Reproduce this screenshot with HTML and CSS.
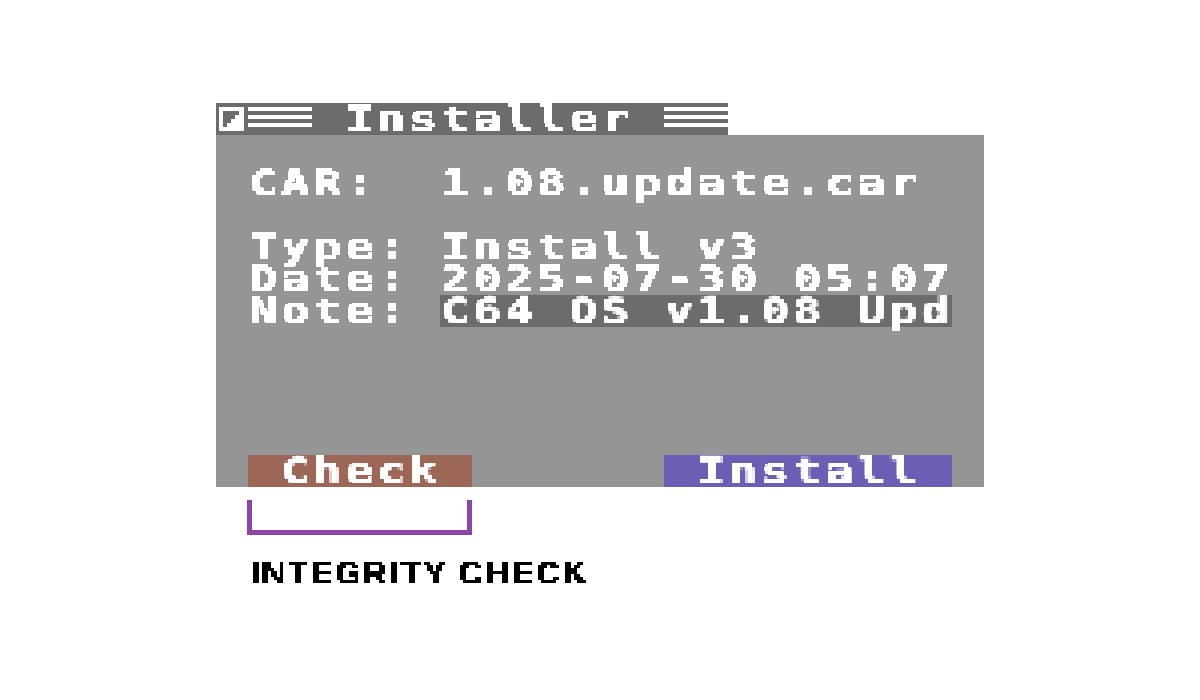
FILE: index.html
```html
<!DOCTYPE html>
<html lang="en">
<head>
    <meta charset="UTF-8">
    <title>Installer</title>
    <link rel="stylesheet" href="styles.css">
</head>
<body>
<svg class="filters" width="0" height="0" aria-hidden="true">
    <!-- snaps text onto the 4px C64 pixel grid -->
    <filter id="px4" x="0" y="0" width="100%" height="100%" color-interpolation-filters="sRGB">
        <feComponentTransfer in="SourceGraphic" result="hard">
            <feFuncA type="discrete" tableValues="0 1"/>
        </feComponentTransfer>
        <feFlood x="1" y="1" width="2" height="2" flood-color="#fff"/>
        <feComposite x="0" y="0" width="4" height="4"/>
        <feTile result="dots"/>
        <feComposite in="hard" in2="dots" operator="in"/>
        <feMorphology operator="dilate" radius="1"/>
    </filter>
    <!-- same thing, 3px grid for the caption -->
    <filter id="px3" x="0" y="0" width="100%" height="100%" color-interpolation-filters="sRGB">
        <feComponentTransfer in="SourceGraphic" result="hard">
            <feFuncA type="discrete" tableValues="0 1"/>
        </feComponentTransfer>
        <feFlood x="1" y="1" width="1" height="1" flood-color="#fff"/>
        <feComposite x="0" y="0" width="3" height="3"/>
        <feTile result="dots"/>
        <feComposite in="hard" in2="dots" operator="in"/>
        <feMorphology operator="dilate" radius="1"/>
    </filter>
</svg>

<div id="screen">
    <div id="titlebar">
        <svg class="closebox" width="32" height="32" viewBox="0 0 32 32">
            <rect x="3" y="4" width="25" height="24" fill="#fff"/>
            <path d="M7 8h16v4h-4v4h-4v4h-4v4H7z" fill="#6c6c6c"/>
        </svg>
        <div class="stripes"><i></i><i></i><i></i></div>
        <div class="title txt"><span>Installer</span></div>
        <div class="stripes"><i></i><i></i><i></i></div>
    </div>
    <div id="panel">
        <div class="row first">
            <div class="label txt"><span>CAR:</span></div>
            <div class="value txt"><span>1.08.update.car</span></div>
        </div>
        <div class="row gap">
            <div class="label txt"><span>Type:</span></div>
            <div class="value txt"><span>Install v3</span></div>
        </div>
        <div class="row">
            <div class="label txt"><span>Date:</span></div>
            <div class="value txt"><span>2025-07-30 05:07</span></div>
        </div>
        <div class="row">
            <div class="label txt"><span>Note:</span></div>
            <div class="value field txt"><span>C64 OS v1.08 Upd</span></div>
        </div>
        <div class="buttons">
            <div class="btn btn-check txt"><span>Check</span></div>
            <div class="btn btn-install txt"><span>Install</span></div>
        </div>
    </div>
    <div class="bracket"></div>
    <div class="caption"><span>INTEGRITY CHECK</span></div>
</div>
</body>
</html>
```

FILE: styles.css
```css
body {
    margin: 0;
    background-color: #fff;
}

.filters {
    display: block;
    height: 0;
}

#screen {
    width: 768px;
    margin-left: 216px;
    padding-top: 103px;
}

#titlebar {
    display: flex;
    width: 512px;
    height: 32px;
    background-color: #6c6c6c;
}

.closebox {
    display: block;
    flex: none;
}

.stripes {
    display: flex;
    flex-direction: column;
    gap: 4px;
    width: 64px;
    padding-top: 4px;
}

.stripes i {
    display: block;
    height: 4px;
    background-color: #fff;
}

.title {
    width: 352px;
    padding-left: 32px;
    box-sizing: border-box;
}

.txt {
    height: 32px;
    filter: url(#px4);
    font-family: "DejaVu Sans Mono", monospace;
    font-weight: bold;
    font-size: 35px;
    line-height: 32px;
    color: #fff;
    white-space: pre;
    -webkit-text-stroke: 0.6px #fff;
}

.txt span {
    display: inline-block;
    letter-spacing: 3.17px;
    padding-left: 1px;
    transform: scaleX(1.32);
    transform-origin: left top;
}

#panel {
    height: 352px;
    padding: 32px 32px 0;
    box-sizing: border-box;
    background-color: #959595;
}

.row {
    display: flex;
}

.row.gap {
    margin-top: 32px;
}

.label {
    width: 192px;
}

.value {
    width: 512px;
}

.field {
    background-color: #6c6c6c;
}

.buttons {
    display: flex;
    justify-content: space-between;
    width: 704px;
    margin-top: 128px;
}

.btn {
    text-align: left;
    padding-left: 32px;
    box-sizing: border-box;
}

.btn-check {
    width: 224px;
    background-color: #9c6757;
}

.btn-install {
    width: 288px;
    background-color: #6c5eb5;
}

.bracket {
    width: 225px;
    height: 35px;
    margin: 13px 0 0 31px;
    box-sizing: border-box;
    border: 5px solid #8b46a8;
    border-top: 0;
}

.caption {
    width: 360px;
    height: 32px;
    margin: 24px 0 0 34px;
    filter: url(#px3);
    font-family: "Liberation Sans", sans-serif;
    font-weight: bold;
    font-size: 31px;
    line-height: 30px;
    letter-spacing: 2px;
    color: #000;
    white-space: pre;
    -webkit-text-stroke: 0.8px #000;
}

.caption span {
    display: inline-block;
    transform: scaleX(1.08);
    transform-origin: left top;
}
```
